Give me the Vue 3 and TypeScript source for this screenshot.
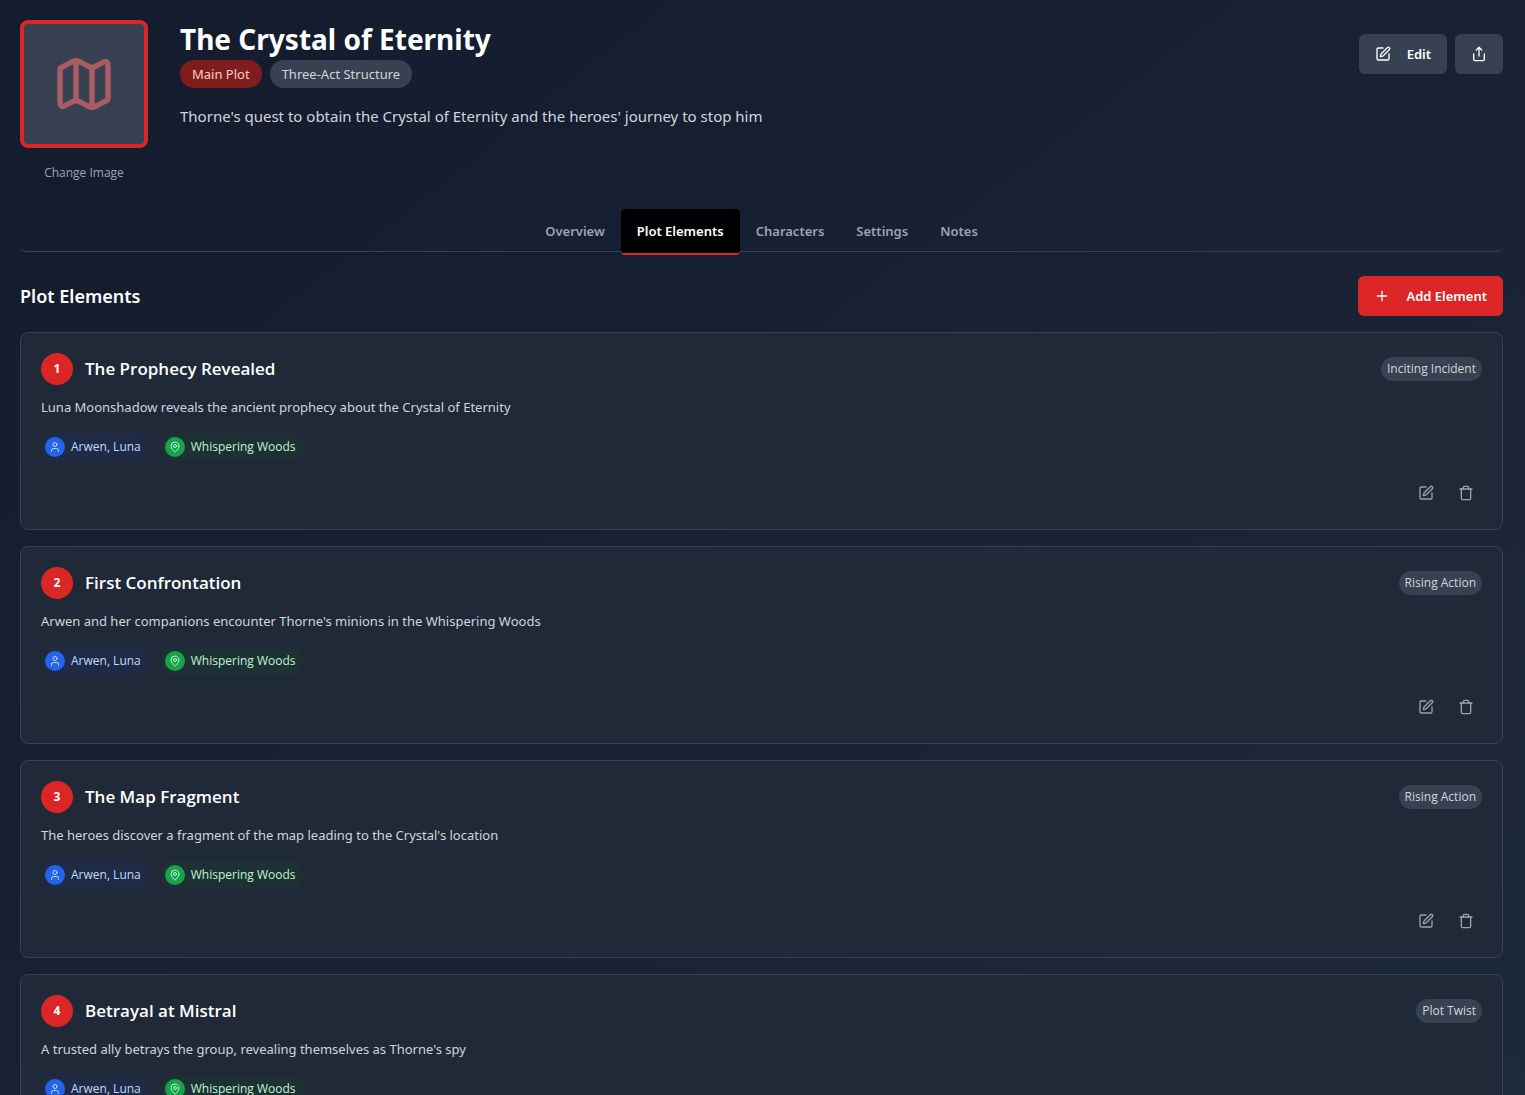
<script setup lang="ts">
import { ref } from 'vue'

interface PlotElement {
  title: string
  type: string
  description: string
  characters: string
  location: string
}

const tabs: string[] = ['Overview', 'Plot Elements', 'Characters', 'Settings', 'Notes']
const activeTab = ref<string>('Plot Elements')

const elements = ref<PlotElement[]>([
  {
    title: 'The Prophecy Revealed',
    type: 'Inciting Incident',
    description: 'Luna Moonshadow reveals the ancient prophecy about the Crystal of Eternity',
    characters: 'Arwen, Luna',
    location: 'Whispering Woods',
  },
  {
    title: 'First Confrontation',
    type: 'Rising Action',
    description: "Arwen and her companions encounter Thorne's minions in the Whispering Woods",
    characters: 'Arwen, Luna',
    location: 'Whispering Woods',
  },
  {
    title: 'The Map Fragment',
    type: 'Rising Action',
    description: "The heroes discover a fragment of the map leading to the Crystal's location",
    characters: 'Arwen, Luna',
    location: 'Whispering Woods',
  },
  {
    title: 'Betrayal at Mistral',
    type: 'Plot Twist',
    description: "A trusted ally betrays the group, revealing themselves as Thorne's spy",
    characters: 'Arwen, Luna',
    location: 'Whispering Woods',
  },
])
</script>

<template>
  <div class="page">
    <header class="header">
      <div class="cover">
        <div class="cover-frame">
          <svg class="icon cover-icon" viewBox="0 0 24 24" aria-hidden="true">
            <path d="M14.106 5.553a2 2 0 0 0 1.788 0l3.659-1.83A1 1 0 0 1 21 4.619v12.764a1 1 0 0 1-.553.894l-4.553 2.277a2 2 0 0 1-1.788 0l-4.212-2.106a2 2 0 0 0-1.788 0l-3.659 1.83A1 1 0 0 1 3 19.381V6.618a1 1 0 0 1 .553-.894l4.553-2.277a2 2 0 0 1 1.788 0z" />
            <path d="M15 5.764v15" />
            <path d="M9 3.236v15" />
          </svg>
        </div>
        <button type="button" class="change-image">Change Image</button>
      </div>
      <div class="summary">
        <h1 class="title">The Crystal of Eternity</h1>
        <div class="badges">
          <span class="badge badge-main">Main Plot</span>
          <span class="badge">Three-Act Structure</span>
        </div>
        <p class="lead">Thorne's quest to obtain the Crystal of Eternity and the heroes' journey to stop him</p>
      </div>
      <div class="actions">
        <button type="button" class="button">
          <svg class="icon" viewBox="0 0 24 24" aria-hidden="true">
            <path d="M12 3H5a2 2 0 0 0-2 2v14a2 2 0 0 0 2 2h14a2 2 0 0 0 2-2v-7" />
            <path d="M18.375 2.625a1 1 0 0 1 3 3l-9.013 9.014a2 2 0 0 1-.853.505l-2.873.84a.5.5 0 0 1-.62-.62l.84-2.873a2 2 0 0 1 .506-.852z" />
          </svg>
          Edit
        </button>
        <button type="button" class="button" aria-label="Share">
          <svg class="icon" viewBox="0 0 24 24" aria-hidden="true">
            <path d="M4 12v8a2 2 0 0 0 2 2h12a2 2 0 0 0 2-2v-8" />
            <path d="m16 6-4-4-4 4" />
            <path d="M12 2v13" />
          </svg>
        </button>
      </div>
    </header>

    <nav class="tabs" role="tablist">
      <button
        v-for="tab in tabs"
        :key="tab"
        type="button"
        role="tab"
        class="tab"
        :class="{ active: tab === activeTab }"
        :aria-selected="tab === activeTab"
        @click="activeTab = tab"
      >
        {{ tab }}
      </button>
    </nav>

    <main>
      <div class="section-head">
        <h2 class="section-title">Plot Elements</h2>
        <button type="button" class="button button-primary">
          <svg class="icon" viewBox="0 0 24 24" aria-hidden="true">
            <path d="M5 12h14" />
            <path d="M12 5v14" />
          </svg>
          Add Element
        </button>
      </div>

      <div class="cards">
        <article v-for="(element, index) in elements" :key="element.title" class="card">
          <div class="card-head">
            <span class="number">{{ index + 1 }}</span>
            <h3 class="card-title">{{ element.title }}</h3>
            <span class="type">{{ element.type }}</span>
          </div>
          <p class="description">{{ element.description }}</p>
          <div class="chips">
            <span class="chip chip-people">
              <span class="dot">
                <svg class="icon chip-icon" viewBox="0 0 24 24" aria-hidden="true">
                  <path d="M19 21v-2a4 4 0 0 0-4-4H9a4 4 0 0 0-4 4v2" />
                  <circle cx="12" cy="7" r="4" />
                </svg>
              </span>
              {{ element.characters }}
            </span>
            <span class="chip chip-place">
              <span class="dot">
                <svg class="icon chip-icon" viewBox="0 0 24 24" aria-hidden="true">
                  <path d="M20 10c0 4.993-5.539 10.193-7.399 11.799a1 1 0 0 1-1.202 0C9.539 20.193 4 14.993 4 10a8 8 0 0 1 16 0" />
                  <circle cx="12" cy="10" r="3" />
                </svg>
              </span>
              {{ element.location }}
            </span>
          </div>
          <div class="card-actions">
            <button type="button" class="icon-button" aria-label="Edit element">
              <svg class="icon" viewBox="0 0 24 24" aria-hidden="true">
                <path d="M12 3H5a2 2 0 0 0-2 2v14a2 2 0 0 0 2 2h14a2 2 0 0 0 2-2v-7" />
                <path d="M18.375 2.625a1 1 0 0 1 3 3l-9.013 9.014a2 2 0 0 1-.853.505l-2.873.84a.5.5 0 0 1-.62-.62l.84-2.873a2 2 0 0 1 .506-.852z" />
              </svg>
            </button>
            <button type="button" class="icon-button" aria-label="Delete element">
              <svg class="icon" viewBox="0 0 24 24" aria-hidden="true">
                <path d="M3 6h18" />
                <path d="M19 6v14c0 1-1 2-2 2H7c-1 0-2-1-2-2V6" />
                <path d="M8 6V4c0-1 1-2 2-2h4c1 0 2 1 2 2v2" />
              </svg>
            </button>
          </div>
        </article>
      </div>
    </main>
  </div>
</template>

<style>
body {
  background: #1e293b;
}
</style>

<style scoped>
.page {
  box-sizing: border-box;
  min-height: 100vh;
  padding: 20px 22px 20px 20px;
  background: linear-gradient(to bottom right, #131b2d, #1e293b);
  color: #ffffff;
  font-family: 'Segoe UI', 'Noto Sans', 'Open Sans', sans-serif;
  font-size: 13px;
  line-height: 20px;
}

h1,
h2,
h3,
p {
  margin: 0;
}

button {
  border: 0;
  font: inherit;
  cursor: pointer;
}

.icon {
  display: block;
  flex: none;
  width: 16px;
  height: 16px;
  fill: none;
  stroke: currentColor;
  stroke-width: 2;
  stroke-linecap: round;
  stroke-linejoin: round;
}

.header {
  display: flex;
  gap: 32px;
}

.cover {
  display: flex;
  flex-direction: column;
  gap: 8px;
  width: 128px;
}

.cover-frame {
  display: flex;
  align-items: center;
  justify-content: center;
  box-sizing: border-box;
  height: 128px;
  border: 4px solid #dc2626;
  border-radius: 8px;
  background: #374151;
}

.cover-icon {
  width: 64px;
  height: 64px;
  color: #f87171;
  opacity: 0.6;
}

.change-image,
.card-title,
.type,
.chip {
  font-family: 'Segoe UI', 'Open Sans', 'Noto Sans', sans-serif;
}

.change-image {
  height: 33px;
  padding: 0;
  background: transparent;
  color: #9ca3af;
  font-size: 12px;
}

.summary {
  flex: 1;
}

.title {
  margin-bottom: 2px;
  font-size: 28px;
  font-weight: 700;
  line-height: 38px;
}

.badges {
  display: flex;
  gap: 8px;
}

.badge {
  padding: 4px 12px;
  border-radius: 14px;
  background: #374151;
  color: #d1d5db;
}

.badge-main {
  background: #7f1d1d;
  color: #fecaca;
}

.lead {
  margin-top: 16px;
  color: #d1d5db;
  font-size: 15px;
  line-height: 24px;
}

.actions {
  display: flex;
  align-items: flex-start;
  gap: 8px;
  padding-top: 14px;
}

.button {
  display: flex;
  align-items: center;
  gap: 16px;
  height: 40px;
  padding: 0 16px;
  border-radius: 6px;
  background: #374151;
  color: #ffffff;
  font-weight: 600;
}

.button-primary {
  background: #dc2626;
}

.tabs {
  display: flex;
  justify-content: center;
  margin-top: 20px;
  border-bottom: 1px solid #374151;
  border-radius: 6px;
}

.tab {
  height: 46px;
  margin-bottom: -4px;
  padding: 0 16px;
  border-bottom: 2px solid transparent;
  border-radius: 4px;
  background: transparent;
  color: #9ca3af;
  font-weight: 600;
}

.tab.active {
  border-bottom-color: #dc2626;
  background: #000000;
  color: #ffffff;
}

.section-head {
  display: flex;
  align-items: center;
  justify-content: space-between;
  margin: 24px 0 16px;
}

.section-title {
  font-size: 18px;
  font-weight: 600;
  line-height: 28px;
}

.cards {
  display: flex;
  flex-direction: column;
  gap: 16px;
}

.card {
  padding: 20px;
  border: 1px solid #374151;
  border-radius: 8px;
  background: #1f2937;
}

.card-head {
  display: flex;
  align-items: center;
  gap: 12px;
}

.number {
  display: flex;
  align-items: center;
  justify-content: center;
  width: 32px;
  height: 32px;
  border-radius: 50%;
  background: #dc2626;
  font-size: 12px;
  font-weight: 700;
}

.card-title {
  flex: 1;
  font-size: 17px;
  font-weight: 600;
  line-height: 28px;
}

.type {
  padding: 2px 6px;
  border-radius: 12px;
  background: #374151;
  color: #d1d5db;
  font-size: 12px;
}

.description {
  margin-top: 12px;
  color: #d1d5db;
}

.chips {
  display: flex;
  gap: 12px;
  margin-top: 16px;
}

.chip {
  display: flex;
  align-items: center;
  gap: 6px;
  padding: 4px 8px 4px 4px;
  border-radius: 14px;
  font-size: 12px;
}

.chip-people {
  background: #1f2b45;
  color: #bfdbfe;
}

.chip-place {
  background: #1f3035;
  color: #bbf7d0;
}

.dot {
  display: flex;
  align-items: center;
  justify-content: center;
  width: 20px;
  height: 20px;
  border-radius: 50%;
}

.chip-people .dot {
  background: #2563eb;
}

.chip-place .dot {
  background: #16a34a;
}

.chip-icon {
  width: 12px;
  height: 12px;
}

.card-actions {
  display: flex;
  justify-content: flex-end;
  gap: 8px;
  margin-top: 16px;
}

.icon-button {
  display: flex;
  align-items: center;
  justify-content: center;
  width: 32px;
  height: 32px;
  padding: 0;
  border-radius: 6px;
  background: transparent;
  color: #9ca3af;
}
</style>
